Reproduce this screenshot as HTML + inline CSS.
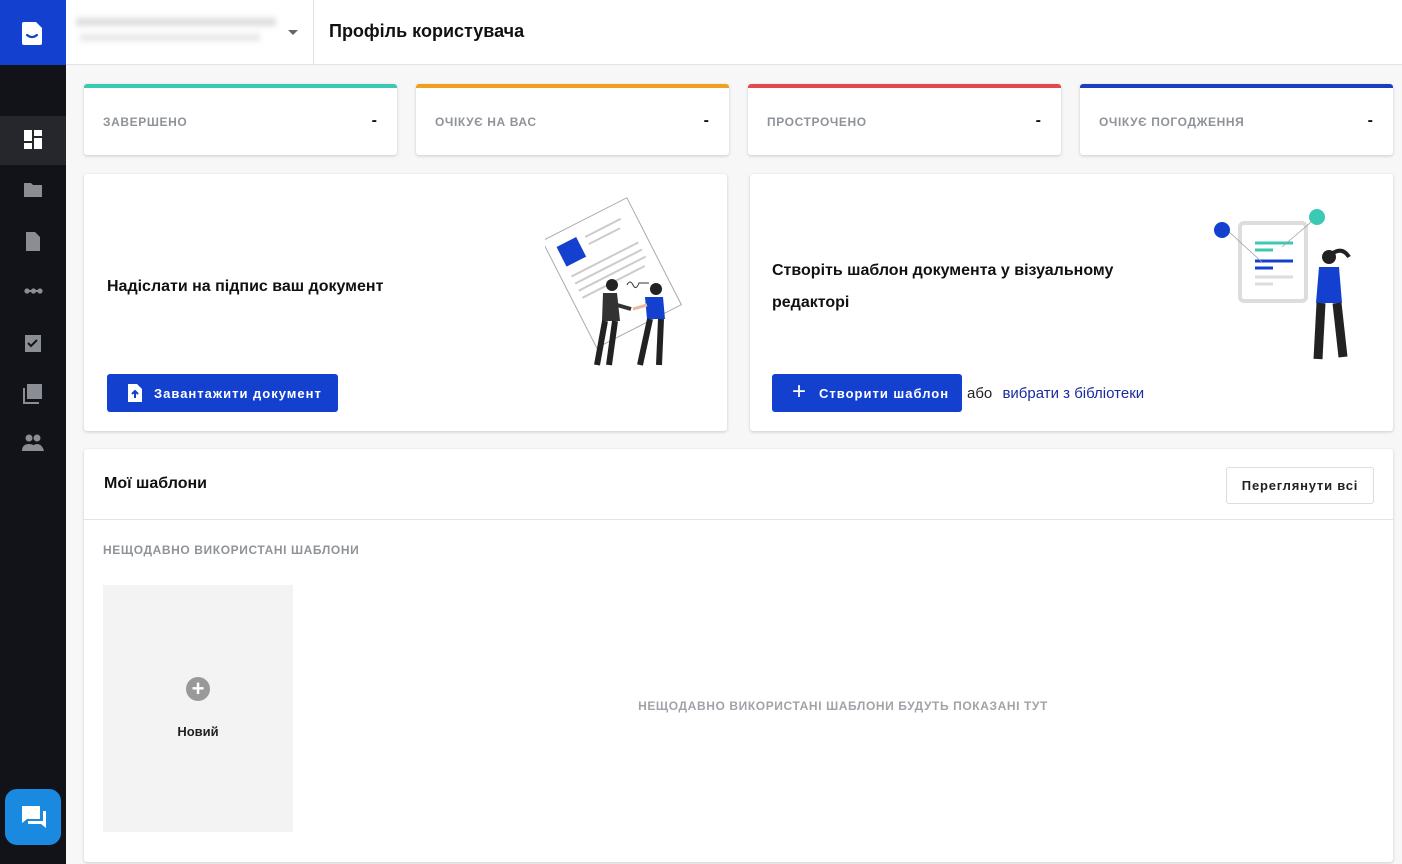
<!DOCTYPE html>
<html><head><meta charset="utf-8"><style>
*{box-sizing:border-box;margin:0;padding:0}
body{width:1402px;height:864px;overflow:hidden;background:#f7f7f7;font-family:"Liberation Sans",sans-serif;position:relative;color:#111}
.abs{position:absolute}
.side{left:0;top:0;width:66px;height:864px;background:#111318}
.logo{left:0;top:0;width:66px;height:65px;background:#1440d0}
.top{left:66px;top:0;width:1336px;height:65px;background:#fff;border-bottom:1px solid #e3e3e3}
.card{background:#fff;border-radius:3px;box-shadow:0 1px 3px rgba(0,0,0,.18)}
.stat{top:84px;width:313px;height:71px;border-top:4px solid}
.stat .l{position:absolute;left:19px;top:27px;font-size:12px;font-weight:bold;color:#8f9399;letter-spacing:.6px}
.stat .d{position:absolute;right:20px;top:24px;font-size:16px;font-weight:bold}
.btn{background:#1440d0;color:#fff;border-radius:3px;font-weight:bold;font-size:13px;letter-spacing:1px;display:flex;align-items:center}
.ic{fill:#8a8d93}
</style></head><body>
<div class="abs side"></div>
<div class="abs logo"><svg width="66" height="65" viewBox="0 0 66 65"><path d="M24 22h12l6 6v15a2 2 0 0 1-2 2H24a2 2 0 0 1-2-2V24a2 2 0 0 1 2-2z" fill="#fff"/><path d="M27 35q5 4 10 0" stroke="#1440d0" stroke-width="2.2" fill="none" stroke-linecap="round"/></svg></div>
<div class="abs" style="left:0;top:116px;width:66px;height:49px;background:#25272c"></div>
<svg class="abs" style="left:0;top:116px" width="66" height="360">
<g fill="#fff"><rect x="24" y="14" width="8" height="11"/><rect x="34" y="14" width="8" height="6"/><rect x="24" y="27" width="8" height="6"/><rect x="34" y="22" width="8" height="11"/></g>
<path class="ic" d="M24 67h7l2 2h9v12H24z"/>
<path class="ic" d="M26 116h9l5 5v14H26z"/>
<g class="ic"><circle cx="27" cy="175" r="2.6"/><circle cx="33.5" cy="175" r="2.6"/><circle cx="40" cy="175" r="2.6"/><rect x="27" y="174" width="13" height="2"/></g>
<path class="ic" d="M25 219h16v17H25z"/><path d="M28 227l3 3 6-6" stroke="#111318" stroke-width="2" fill="none"/>
<path class="ic" d="M27 268h15v15H27z M23 272h2v14h14v2H23z"/>
<g class="ic"><circle cx="29" cy="322" r="3.5"/><circle cx="37" cy="322" r="3.5"/><path d="M22 335q0-7 7-7t7 7z M32 335q0-7 5-7t7 7z"/></g>
</svg>
<div class="abs" style="left:5px;top:789px;width:56px;height:56px;border-radius:12px;background:#1a8ae0"><svg width="56" height="56"><path d="M17 17h18v13H22l-5 4z" fill="#fff"/><path d="M38 22h3v17l-5-4H23v-3h15z" fill="#fff"/></svg></div>
<div class="abs top"></div>
<div class="abs" style="left:76px;top:18px;width:200px;height:8px;background:#ddd;filter:blur(3px)"></div>
<div class="abs" style="left:80px;top:34px;width:180px;height:7px;background:#e6e6e6;filter:blur(3px)"></div>
<div class="abs" style="left:288px;top:30px;border:5px solid transparent;border-top:5px solid #666"></div>
<div class="abs" style="left:313px;top:0;width:1px;height:65px;background:#e3e3e3"></div>
<div class="abs" style="left:329px;top:21px;font-size:18px;font-weight:bold;color:#111">Профіль користувача</div>

<div class="abs card stat" style="left:84px;border-color:#3cc9b4"><span class="l">ЗАВЕРШЕНО</span><span class="d">-</span></div>
<div class="abs card stat" style="left:416px;border-color:#f0a020"><span class="l">ОЧІКУЄ НА ВАС</span><span class="d">-</span></div>
<div class="abs card stat" style="left:748px;border-color:#e04a4a"><span class="l">ПРОСТРОЧЕНО</span><span class="d">-</span></div>
<div class="abs card stat" style="left:1080px;border-color:#1a40c0"><span class="l">ОЧІКУЄ ПОГОДЖЕННЯ</span><span class="d">-</span></div>

<div class="abs card" style="left:84px;top:174px;width:643px;height:257px"></div>
<div class="abs" style="left:107px;top:278px;font-size:16px;font-weight:bold">Надіслати на підпис ваш документ</div>
<div class="abs btn" style="left:107px;top:374px;width:231px;height:38px;padding-left:18px"><svg width="20" height="20" viewBox="0 0 20 20"><path d="M3 1h9l5 5v13H3z" fill="#fff"/><path d="M10 15V8M7 11l3-3 3 3" stroke="#1440d0" stroke-width="2" fill="none"/></svg><span style="margin-left:9px">Завантажити документ</span></div>
<svg class="abs" style="left:545px;top:195px" width="170" height="180">
<g transform="rotate(-27 60 70)"><rect x="15" y="20" width="95" height="120" fill="#fff" stroke="#aaa"/><rect x="25" y="32" width="22" height="22" fill="#1440d0"/><g stroke="#ccc" stroke-width="2"><line x1="55" y1="36" x2="95" y2="36"/><line x1="55" y1="44" x2="90" y2="44"/><line x1="25" y1="65" x2="100" y2="65"/><line x1="25" y1="73" x2="100" y2="73"/><line x1="25" y1="81" x2="100" y2="81"/><line x1="25" y1="89" x2="95" y2="89"/></g></g>
<path d="M82 90q3-6 6 0t6-2l10 0" stroke="#333" fill="none"/>
<circle cx="67" cy="90" r="6" fill="#222"/><path d="M58 98h14l3 28H57z" fill="#333"/><path d="M60 126l-8 44M70 126l-6 44" stroke="#222" stroke-width="6"/><path d="M72 110l14 4" stroke="#333" stroke-width="4"/>
<circle cx="111" cy="94" r="6" fill="#222"/><path d="M100 102h18l2 22h-18z" fill="#1440d0"/><path d="M105 124l-10 46M116 124l-2 46" stroke="#222" stroke-width="6"/><path d="M102 110l-14 4" stroke="#e8b9a0" stroke-width="3"/>
</svg>

<div class="abs card" style="left:750px;top:174px;width:643px;height:257px"></div>
<div class="abs" style="left:772px;top:255px;font-size:16px;font-weight:bold;line-height:32px">Створіть шаблон документа у візуальному<br>редакторі</div>
<div class="abs btn" style="left:772px;top:374px;width:190px;height:38px;padding-left:20px"><span style="font-size:24px;font-weight:normal;margin-right:12px;margin-top:-3px">+</span>Створити шаблон</div>
<div class="abs" style="left:967px;top:385px;font-size:15px;color:#222">або <span style="color:#1a2aa0;margin-left:6px">вибрати з бібліотеки</span></div>
<svg class="abs" style="left:1205px;top:205px" width="170" height="165">
<rect x="35" y="18" width="66" height="78" rx="4" fill="#fff" stroke="#ddd" stroke-width="4"/>
<g stroke-width="3"><line x1="50" y1="38" x2="88" y2="38" stroke="#3cc9b4"/><line x1="50" y1="45" x2="68" y2="45" stroke="#3cc9b4"/><line x1="50" y1="56" x2="88" y2="56" stroke="#1440d0"/><line x1="50" y1="63" x2="68" y2="63" stroke="#1440d0"/><line x1="50" y1="72" x2="88" y2="72" stroke="#ddd"/><line x1="50" y1="79" x2="68" y2="79" stroke="#ddd"/></g>
<path d="M22 25l36 33M112 12l-35 30" stroke="#999" stroke-width=".7" fill="none"/>
<circle cx="17" cy="25" r="8" fill="#1440d0"/><circle cx="112" cy="12" r="8" fill="#3cc9b4"/>
<circle cx="124" cy="52" r="7" fill="#222"/><path d="M128 48q10-6 16 4" stroke="#222" stroke-width="4" fill="none"/>
<path d="M114 62h20l3 36h-26z" fill="#1440d0"/><path d="M116 98l-3 56M132 98l6 54" stroke="#222" stroke-width="9"/>
</svg>

<div class="abs card" style="left:84px;top:449px;width:1309px;height:413px"></div>
<div class="abs" style="left:104px;top:475px;font-size:16px;font-weight:bold">Мої шаблони</div>
<div class="abs" style="left:1226px;top:467px;width:148px;height:37px;border:1px solid #ddd;border-radius:3px;font-size:13px;font-weight:bold;letter-spacing:.8px;text-align:center;line-height:35px;color:#222">Переглянути всі</div>
<div class="abs" style="left:84px;top:519px;width:1309px;height:1px;background:#e3e3e3"></div>
<div class="abs" style="left:103px;top:543px;font-size:12px;font-weight:bold;color:#8f9399;letter-spacing:.6px">НЕЩОДАВНО ВИКОРИСТАНІ ШАБЛОНИ</div>
<div class="abs" style="left:103px;top:585px;width:190px;height:247px;background:#f3f3f3"></div>
<div class="abs" style="left:186px;top:677px;width:24px;height:24px;border-radius:50%;background:#999;color:#fff;font-size:22px;line-height:23px;text-align:center;font-weight:bold">+</div>
<div class="abs" style="left:103px;top:724px;width:190px;text-align:center;font-size:13px;font-weight:bold;color:#222">Новий</div>
<div class="abs" style="left:293px;top:699px;width:1100px;text-align:center;font-size:12px;font-weight:bold;color:#a0a3a8;letter-spacing:.6px">НЕЩОДАВНО ВИКОРИСТАНІ ШАБЛОНИ БУДУТЬ ПОКАЗАНІ ТУТ</div>
</body></html>
